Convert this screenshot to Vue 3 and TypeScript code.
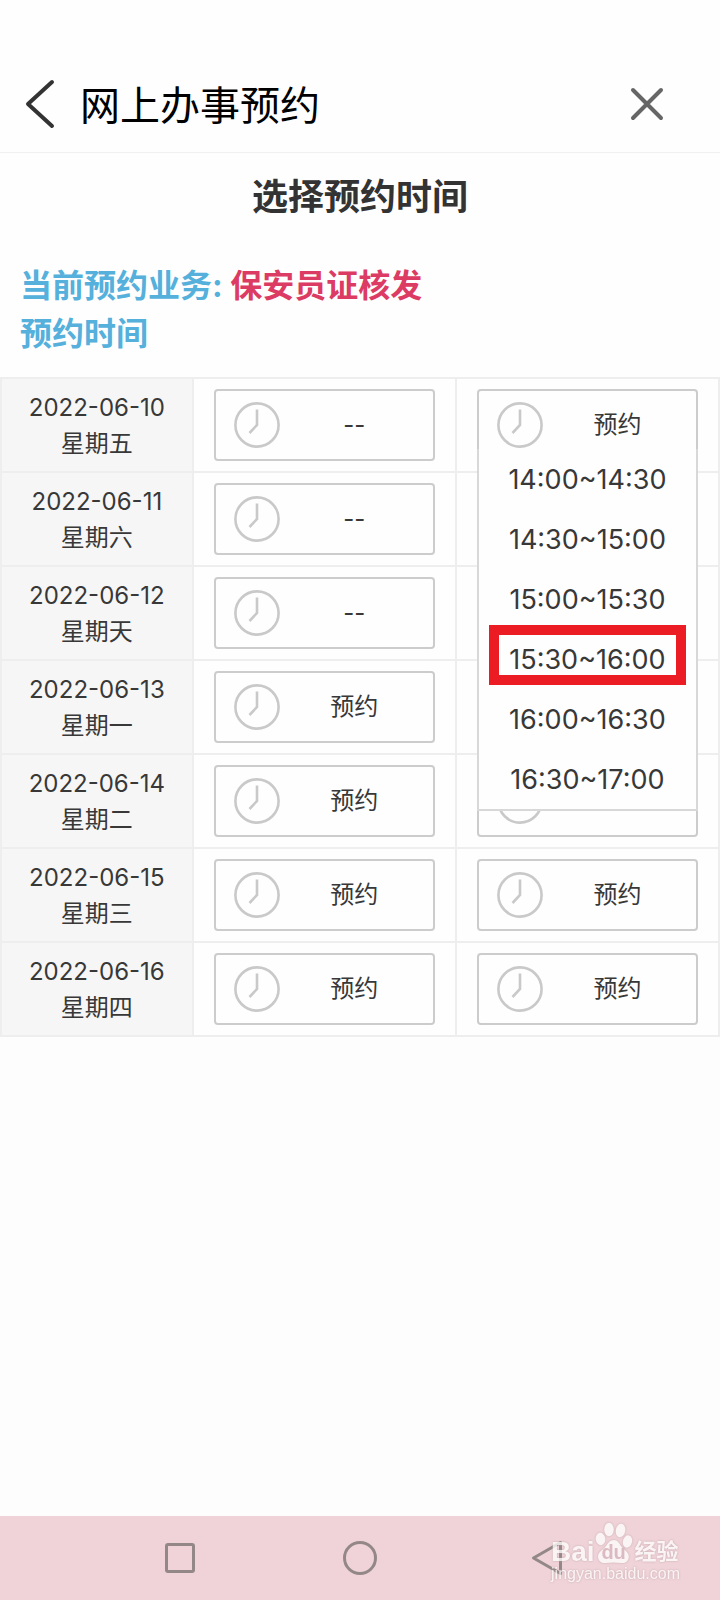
<script setup lang="ts">
import { ref } from 'vue'

interface Day {
  date: string
  week: string
  morning: string
  afternoon: string
}

const days: Day[] = [
  { date: '2022-06-10', week: '星期五', morning: '--', afternoon: '预约' },
  { date: '2022-06-11', week: '星期六', morning: '--', afternoon: '' },
  { date: '2022-06-12', week: '星期天', morning: '--', afternoon: '' },
  { date: '2022-06-13', week: '星期一', morning: '预约', afternoon: '' },
  { date: '2022-06-14', week: '星期二', morning: '预约', afternoon: '' },
  { date: '2022-06-15', week: '星期三', morning: '预约', afternoon: '预约' },
  { date: '2022-06-16', week: '星期四', morning: '预约', afternoon: '预约' },
]

const times = ['14:00~14:30', '14:30~15:00', '15:00~15:30', '15:30~16:00', '16:00~16:30', '16:30~17:00']

const opened = ref('2022-06-10-afternoon')
const selected = ref('15:30~16:00')

function toggle(key: string) {
  opened.value = opened.value === key ? '' : key
}
</script>

<template>
  <div class="page">
    <header class="bar">
      <button class="icon-btn back" type="button" aria-label="返回">
        <svg width="32" height="50" viewBox="0 0 32 50" fill="none" stroke="#333" stroke-width="4" stroke-linecap="round" stroke-linejoin="round">
          <path d="M28 3 4 25 28 47" />
        </svg>
      </button>
      <h1 class="bar-title">网上办事预约</h1>
      <button class="icon-btn" type="button" aria-label="关闭">
        <svg width="34" height="34" viewBox="0 0 34 34" fill="none" stroke="#666" stroke-width="4" stroke-linecap="round">
          <path d="M3 3 31 31M31 3 3 31" />
        </svg>
      </button>
    </header>

    <main class="content">
      <h2 class="title">选择预约时间</h2>
      <div class="info">
        <p>当前预约业务: <span class="service">保安员证核发</span></p>
        <p>预约时间</p>
      </div>

      <table class="schedule">
        <colgroup>
          <col class="col-date" />
          <col />
          <col />
        </colgroup>
        <tbody>
          <tr v-for="day in days" :key="day.date">
            <th scope="row">
              <span class="date">{{ day.date }}</span>
              <span class="week">{{ day.week }}</span>
            </th>
            <td v-for="part in (['morning', 'afternoon'] as const)" :key="part">
              <div class="slot">
                <button class="slot-btn" type="button" :disabled="day[part] !== '预约'" @click="toggle(day.date + '-' + part)">
                  <svg class="clock" width="46" height="46" viewBox="0 0 46 46" fill="none" stroke="#c9c9c9">
                    <circle cx="23" cy="23" r="21.6" stroke-width="2.6" />
                    <path d="M23 7.5V23L15.5 31" stroke-width="2.6" />
                  </svg>
                  <span class="slot-text">{{ day[part] }}</span>
                </button>
                <ul v-if="opened === day.date + '-' + part" class="menu">
                  <li v-for="time in times" :key="time">
                    <button class="time" :class="{ marked: time === selected }" type="button" @click="selected = time">{{ time }}</button>
                  </li>
                </ul>
              </div>
            </td>
          </tr>
        </tbody>
      </table>
    </main>

    <nav class="system">
      <button class="icon-btn" type="button" aria-label="最近任务">
        <svg width="34" height="34" viewBox="0 0 34 34" fill="none" stroke="#938887" stroke-width="3">
          <rect x="3.5" y="3.5" width="27" height="27" rx="1.5" />
        </svg>
      </button>
      <button class="icon-btn" type="button" aria-label="主屏幕">
        <svg width="34" height="34" viewBox="0 0 34 34" fill="none" stroke="#938887" stroke-width="3">
          <circle cx="17" cy="17" r="15.5" />
        </svg>
      </button>
      <button class="icon-btn" type="button" aria-label="后退">
        <svg width="46" height="36" viewBox="0 0 46 36" fill="none" stroke="#938887" stroke-width="3" stroke-linejoin="round">
          <path d="M16.500 18 43.500 2.500V33.500Z" />
        </svg>
      </button>

      <div class="watermark">
        <div class="brand">
          <span class="bai">Bai</span>
          <span class="paw">
            <svg width="38" height="44" viewBox="0 0 38 44" fill="#fff">
              <ellipse cx="5.500" cy="17" rx="4.800" ry="6.200" transform="rotate(-8 5.500 17)" />
              <ellipse cx="14" cy="7.500" rx="4.800" ry="6.800" />
              <ellipse cx="25.500" cy="8.500" rx="4.800" ry="6.800" transform="rotate(10 25.500 8.500)" />
              <ellipse cx="32.500" cy="19.500" rx="4.600" ry="6.200" transform="rotate(14 32.500 19.500)" />
              <path d="M19 18c-4 0-6 3-8 6-2.500 3.500-8.500 6-8 11 .4 4 3.500 6.500 7.500 6 5-.7 11-.7 16 0 4 .5 7-2 7.300-6 .4-5-5.500-7.500-7.800-11-2-3-3.500-6-7-6Z" />
            </svg>
            <span class="du">du</span>
          </span>
          <span class="exp">经验</span>
        </div>
        <span class="site">jingyan.baidu.com</span>
      </div>
    </nav>
  </div>
</template>

<style>
body {
  margin: 0;
  background: #fdfdfd;
}
</style>

<style scoped>
.page {
  display: flex;
  flex-direction: column;
  min-height: 100vh;
  color: #383838;
  font-family: Inter, "Noto Sans CJK SC", sans-serif;
}

h1,
h2,
p,
ul {
  margin: 0;
  padding: 0;
}

button {
  margin: 0;
  padding: 0;
  border: 0;
  background: none;
  color: inherit;
  font: inherit;
}

svg {
  display: block;
}

.bar {
  display: flex;
  align-items: center;
  padding: 72px 56px 16px 24px;
  border-bottom: 1px solid #f1f1f1;
  background: #fefefe;
}

.back {
  margin-right: 24px;
}

.bar-title {
  flex: 1;
  padding-top: 4px;
  color: #000;
  font-size: 40px;
  font-weight: 400;
  line-height: 60px;
}

.content {
  background: #fefefe;
}

.title {
  padding: 16px 0 24px;
  color: #333;
  font-size: 36px;
  font-weight: 700;
  line-height: 56px;
  text-align: center;
}

.info {
  padding: 13px 20px 19px;
  color: #55b0dc;
  font-size: 32px;
  font-weight: 700;
  line-height: 48px;
}

.service {
  color: #dc3b63;
}

.schedule {
  width: 100%;
  border-collapse: collapse;
  table-layout: fixed;
}

.col-date {
  width: 26.7%;
}

th,
td {
  border: 2px solid #eee;
}

th {
  padding: 2px 0 0;
  background: #f6f6f6;
  font-weight: 400;
}

.date,
.week {
  display: block;
  font-size: 24px;
  line-height: 36px;
}

td {
  padding: 10px 20px;
}

.slot {
  position: relative;
}

.slot-btn {
  display: flex;
  align-items: center;
  box-sizing: border-box;
  width: 100%;
  height: 72px;
  padding: 0 4px 0 18px;
  border: 2px solid #ccc;
  border-radius: 4px;
}

.slot-text {
  flex: 1;
  font-size: 24px;
  line-height: 32px;
  text-align: center;
}

.menu {
  position: absolute;
  z-index: 1;
  top: 60px;
  right: 0;
  left: 0;
  border: solid #d8d8d8;
  border-width: 0 2px 2px;
  background: #fefefe;
  list-style: none;
}

.time {
  position: relative;
  display: block;
  width: 100%;
  height: 60px;
  font-size: 27px;
}

.marked::after {
  position: absolute;
  inset: -4px 10px 4px;
  border: 10px solid #eb1c24;
  content: "";
}

.system {
  position: relative;
  display: grid;
  grid-template-columns: repeat(3, 1fr);
  place-items: center;
  height: 84px;
  margin-top: auto;
  padding: 0 12.5%;
  background: #efd3d8;
}

.watermark {
  position: absolute;
  right: 40px;
  bottom: 18px;
  color: #fff;
  font-family: "Liberation Sans", "Noto Sans CJK SC", sans-serif;
  opacity: 0.75;
  filter: drop-shadow(0 0 1px #b99da2);
}

.brand {
  display: flex;
  align-items: flex-end;
  height: 44px;
}

.bai {
  font-size: 28px;
  font-weight: 700;
  line-height: 28px;
}

.paw {
  position: relative;
}

.du {
  position: absolute;
  right: 0;
  bottom: 4px;
  left: 0;
  color: #d5b4ba;
  font-size: 20px;
  font-weight: 700;
  line-height: 20px;
  text-align: center;
}

.exp {
  margin-left: 2px;
  font-size: 22px;
  font-weight: 700;
  line-height: 28px;
}

.site {
  display: block;
  font-size: 16px;
  line-height: 16px;
}
</style>
